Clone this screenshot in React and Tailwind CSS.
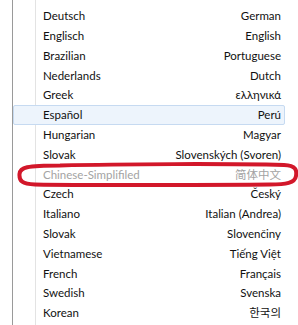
import React from "react";

const rows = [
  ["Deutsch", "German"],
  ["Englisch", "English"],
  ["Brazilian", "Portuguese"],
  ["Nederlands", "Dutch"],
  ["Greek", "ελληνικά"],
  ["Español", "Perú", "hl"],
  ["Hungarian", "Magyar"],
  ["Slovak", "Slovenských (Svoren)"],
  ["Chinese-Simplifiled", "简体中文", "dis"],
  ["Czech", "Český"],
  ["Italiano", "Italian (Andrea)"],
  ["Slovak", "Slovenčiny"],
  ["Vietnamese", "Tiếng Việt"],
  ["French", "Français"],
  ["Swedish", "Svenska"],
  ["Korean", "한국의"],
];

export default function App() {
  return (
    <div
      className="relative w-[298px] h-[325px] overflow-hidden bg-white"
      style={{ fontFamily: 'Lato, "Noto Sans CJK SC", "Noto Sans CJK KR", sans-serif' }}
    >
      <div className="ml-[12px] w-[286px] h-full border-l border-[#9a9a9a] bg-white pt-[6px] relative">
        <div className="absolute left-[22px] top-0 bottom-0 w-px bg-[#e3e3e3]" />
        {rows.map(([l, r, k], i) => (
          <div
            key={i}
            className={
              "relative h-[19.8px] w-[272px] flex items-center justify-between pr-[3px] text-[11.5px] leading-none " +
              (k === "hl"
                ? "bg-[#edf4fc] border border-[#c6daf1] rounded-[2px] "
                : "border border-transparent ") +
              (k === "dis" ? "text-[#a3a3a3]" : "text-[#111111]")
            }
          >
            <span className="pl-[29px]">{l}</span>
            <span>{r}</span>
          </div>
        ))}
      </div>
      <svg
        className="absolute left-0 top-0 pointer-events-none"
        width="298"
        height="325"
        viewBox="0 0 298 325"
      >
        <path
          d="M60 165.5 C 120 164, 230 163.5, 284 165 C 296 165.5, 297 170, 296 176 C 295 183, 286 184.5, 270 184.5 C 200 185, 90 185.5, 35 184.5 C 22 184, 19 181, 19.5 174 C 20 167.5, 26 165.5, 60 165.5 Z"
          fill="none"
          stroke="#d2172a"
          strokeWidth="4"
        />
      </svg>
    </div>
  );
}
